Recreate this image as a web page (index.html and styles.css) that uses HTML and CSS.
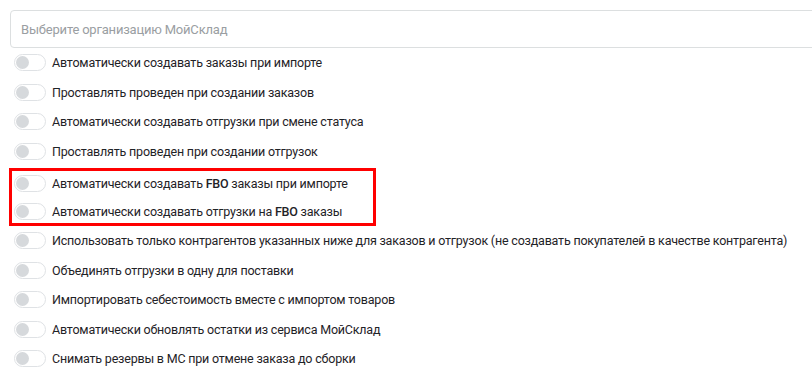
FILE: index.html
```html
<!DOCTYPE html>
<html lang="ru">
<head>
<meta charset="utf-8">
<link rel="stylesheet" href="styles.css">
</head>
<body>
<div class="page">
  <div class="select">Выберите организацию МойСклад</div>
  <div class="list">
    <div class="row"><span class="toggle"><span class="knob"></span></span><span class="label">Автоматически создавать заказы при импорте</span></div>
    <div class="row"><span class="toggle"><span class="knob"></span></span><span class="label">Проставлять проведен при создании заказов</span></div>
    <div class="row"><span class="toggle"><span class="knob"></span></span><span class="label">Автоматически создавать отгрузки при смене статуса</span></div>
    <div class="row"><span class="toggle"><span class="knob"></span></span><span class="label">Проставлять проведен при создании отгрузок</span></div>
    <div class="highlight">
      <div class="row row-in"><span class="toggle"><span class="knob"></span></span><span class="label">Автоматически создавать <b>FBO</b> заказы при импорте</span></div>
      <div class="row row-in"><span class="toggle"><span class="knob"></span></span><span class="label">Автоматически создавать отгрузки на <b>FBO</b> заказы</span></div>
    </div>
    <div class="row"><span class="toggle"><span class="knob"></span></span><span class="label">Использовать только контрагентов указанных ниже для заказов и отгрузок (не создавать покупателей в качестве контрагента)</span></div>
    <div class="row"><span class="toggle"><span class="knob"></span></span><span class="label">Объединять отгрузки в одну для поставки</span></div>
    <div class="row"><span class="toggle"><span class="knob"></span></span><span class="label">Импортировать себестоимость вместе с импортом товаров</span></div>
    <div class="row"><span class="toggle"><span class="knob"></span></span><span class="label">Автоматически обновлять остатки из сервиса МойСклад</span></div>
    <div class="row"><span class="toggle"><span class="knob"></span></span><span class="label">Снимать резервы в МС при отмене заказа до сборки</span></div>
  </div>
</div>
</body>
</html>
```

FILE: styles.css
```css
html, body {
  margin: 0;
  padding: 0;
  background: #ffffff;
  overflow: hidden;
}
body {
  font-family: Roboto, "Liberation Sans", Arial, sans-serif;
  font-size: 12.5px;
  letter-spacing: -0.2px;
  color: #1f2327;
}
.page {
  padding: 10px 0 0 10px;
}
.select {
  box-sizing: border-box;
  height: 38px;
  width: 830px;
  border: 1px solid #dcdfe0;
  border-radius: 4px;
  padding: 0 10px;
  display: flex;
  align-items: center;
  color: #9a9ea2;
  font-size: 13px;
}
.list {
  padding-left: 4px;
}
.row {
  height: 29.5px;
  display: flex;
  align-items: center;
  white-space: nowrap;
}
.highlight {
  margin: 2px 0 0 -5px;
  width: 359px;
  height: 52px;
  border: 3px solid #ff0000;
  padding: 0 0 0 2px;
  display: flex;
  flex-direction: column;
  gap: 4px;
}
.row-in {
  height: 24px;
}
.toggle {
  box-sizing: border-box;
  width: 32px;
  height: 17px;
  border: 1px solid #dfe2e5;
  border-radius: 9px;
  background: #ffffff;
  display: flex;
  align-items: center;
  padding-left: 1px;
  flex-shrink: 0;
}
.knob {
  width: 13px;
  height: 13px;
  border-radius: 50%;
  background: #d6d9dc;
}
.label {
  margin-left: 6px;
}
.label b {
  font-weight: 500;
}
```
